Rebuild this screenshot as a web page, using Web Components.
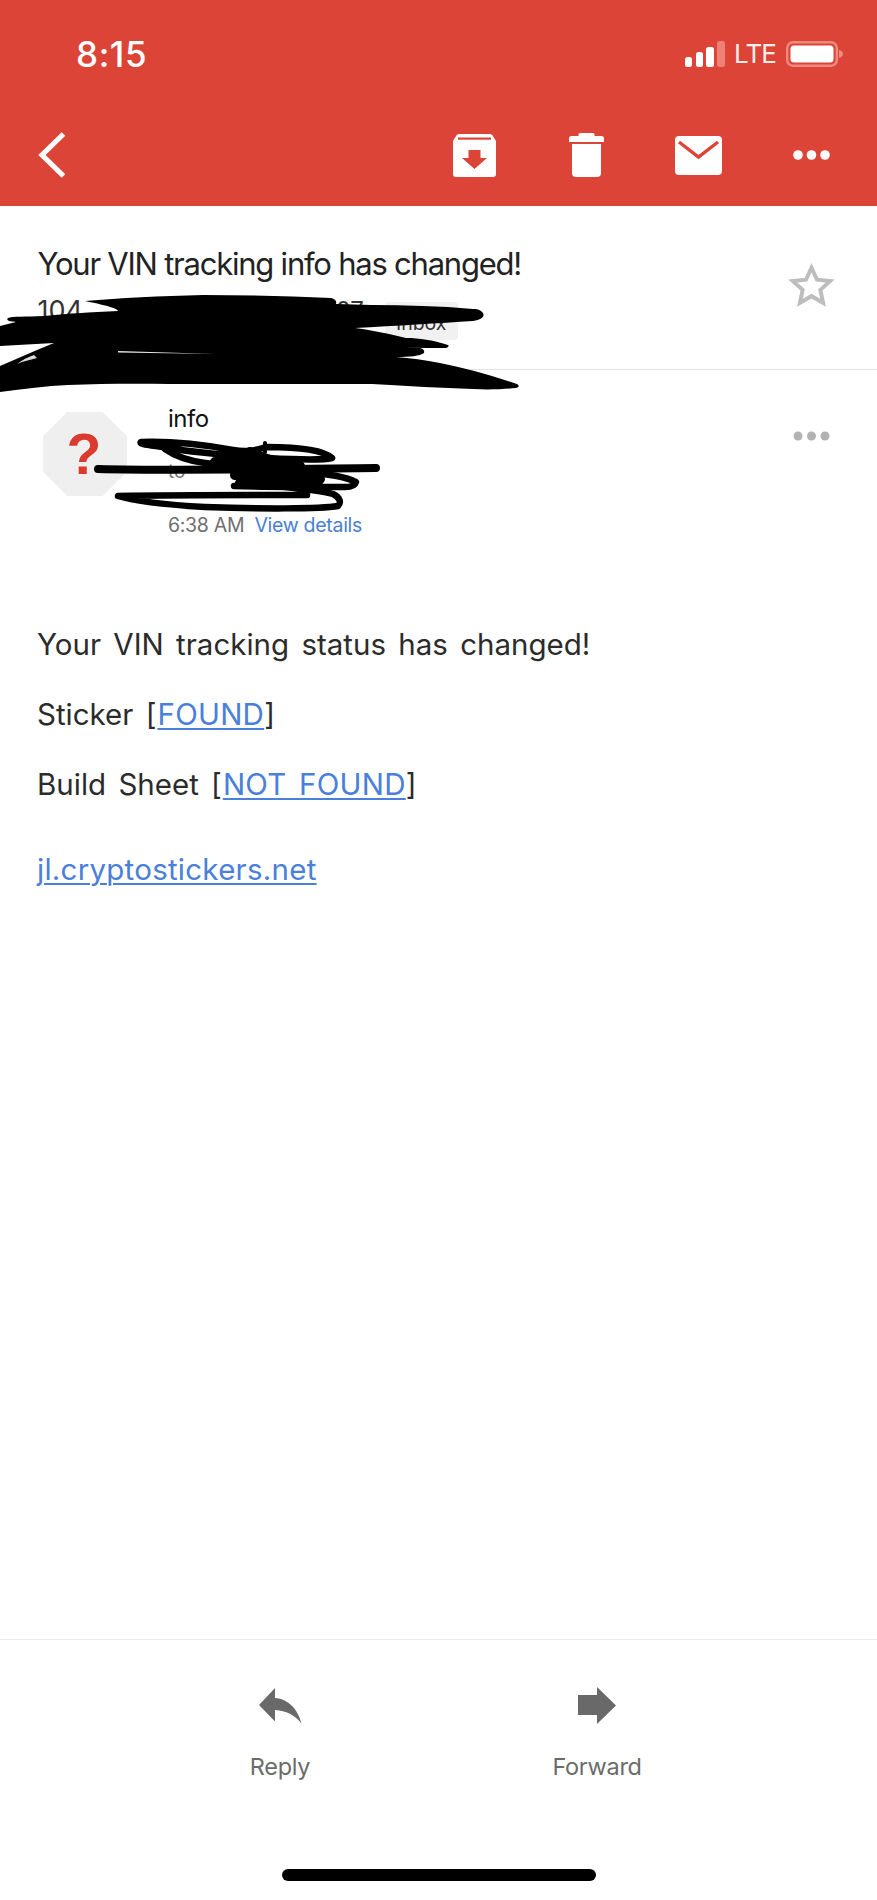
<!DOCTYPE html>
<html><head><meta charset="utf-8"><title>Mail</title>
<style>
html,body{margin:0;padding:0;background:#fff}
body{font-family:Inter,"Liberation Sans",sans-serif;width:877px;height:1900px;overflow:hidden}
</style></head>
<body>
<mail-app></mail-app>
<script>
function def(name, html){
  customElements.define(name, class extends HTMLElement{
    constructor(){super();this.attachShadow({mode:'open'}).innerHTML=html;}
  });
}
def('status-bar',`<style>
:host{display:flex;height:108px;align-items:center;justify-content:space-between;padding:0 34px 0 76px;color:#fff}
.time{font-size:35px;font-weight:500;letter-spacing:.6px;line-height:40px}
.right{display:flex;align-items:center}
.lte{font-size:26px;font-weight:400;letter-spacing:-.9px;margin:0 10px 0 9px;line-height:30px;color:#fdeeec}
svg{display:block}
</style>
<span class="time">8:15</span>
<div class="right">
<svg width="40" height="26" viewBox="0 0 40 26"><rect x="0" y="16" width="7" height="10" rx="2.5" fill="#fff"/><rect x="11" y="11" width="7" height="15" rx="2.5" fill="#fff"/><rect x="21" y="6" width="8" height="20" rx="2.5" fill="#fff"/><rect x="32" y="0" width="8" height="26" rx="2.5" fill="#ee8076"/></svg>
<span class="lte">LTE</span>
<svg width="57" height="26" viewBox="0 0 57 26"><rect x="1.2" y="1.2" width="49.6" height="23.6" rx="6" fill="none" stroke="#f0897f" stroke-width="2.4"/><rect x="4.5" y="4.5" width="43" height="17" rx="3.5" fill="#fff"/><path d="M53 9c2.500.6 4 2 4 4s-1.500 3.400-4 4z" fill="#f0897f"/></svg>
</div>`);
def('action-toolbar',`<style>
:host{display:flex;height:98px;box-sizing:border-box;align-items:center;padding:0 47px 4px 38px;position:relative}
svg{display:block;flex:none}
.back{margin-right:auto}
.gap{width:71px;flex:none}
</style>
<svg class="back" width="28" height="46" viewBox="0 0 28 46"><path d="M25.500 2 4 23l21.500 21" fill="none" stroke="#fff" stroke-width="5.200"/></svg>
<svg width="43" height="43" viewBox="0 0 43 43"><path d="M6 0h31a3 3 0 0 1 2.600 1.500L43 7v33a3 3 0 0 1-3 3H3a3 3 0 0 1-3-3V7l3.400-5.500A3 3 0 0 1 6 0z" fill="#fff"/><rect x="5" y="3.500" width="33" height="2.200" fill="#db4437"/><path d="M15.500 16h12v8h6.500L21.500 35 9 24h6.500z" fill="#db4437"/></svg>
<span class="gap" style="width:73px"></span>
<svg width="35" height="44" viewBox="0 0 35 44"><path d="M11 0h13a1.500 1.500 0 0 1 1.500 1.500V3h7A2.500 2.500 0 0 1 35 5.500V9H0V5.500A2.500 2.500 0 0 1 2.500 3h7V1.500A1.500 1.500 0 0 1 11 0z" fill="#fff"/><path d="M3 11h29v29a4 4 0 0 1-4 4H7a4 4 0 0 1-4-4z" fill="#fff"/></svg>
<span class="gap"></span>
<svg width="47" height="39" viewBox="0 0 47 39"><rect width="47" height="39" rx="4" fill="#fff"/><path d="M4 6l19.500 15L43 6" fill="none" stroke="#db4437" stroke-width="3.400"/></svg>
<span class="gap"></span>
<svg width="37" height="10" viewBox="0 0 37 10"><circle cx="5" cy="5" r="4.800" fill="#fff"/><circle cx="18.500" cy="5" r="4.800" fill="#fff"/><circle cx="32" cy="5" r="4.800" fill="#fff"/></svg>`);
def('app-header',`<style>:host{display:block;background:#db4437;height:206px}</style><status-bar></status-bar><action-toolbar></action-toolbar>`);
def('subject-block',`<style>
:host{display:flex;height:163px;border-bottom:1px solid #e3e3e3;padding:0 42px 0 37.500px;justify-content:space-between;position:relative;color:#222}
.col{padding-top:38px}
h1{margin:0;font-weight:400;font-size:31px;line-height:40px;letter-spacing:-1.230px;white-space:nowrap}
.meta{display:flex;align-items:flex-start;margin-top:12px;font-size:24px;line-height:30px;color:#333;width:420px;justify-content:space-between}
.day{font-size:27px}
.chip{background:#f1f1f1;border-radius:4px;padding:6px 11px 2px;font-size:19.500px;line-height:30px;margin-top:6px;color:#333}
svg{display:block;margin-top:57px;flex:none}
</style>
<div class="col"><h1>Your VIN tracking info has changed!</h1>
<div class="meta"><span class="day">104</span><span style="margin-left:auto;margin-right:21px">07</span><span class="chip">Inbox</span></div></div>
<svg width="47" height="45" viewBox="0 0 45 43"><path d="M22.500 4.500l5.300 11.500 12.500 1.300-9.300 8.400 2.600 12.300-11.100-6.300-11.100 6.300 2.600-12.300-9.300-8.400 12.500-1.300z" fill="none" stroke="#bdbdbd" stroke-width="3.800"/></svg>`);
def('sender-row',`<style>
:host{display:flex;padding:34px 47px 0 43px;color:#111;height:150px;box-sizing:border-box;position:relative}
.av{width:84px;height:84px;flex:none;background:#efefef;clip-path:polygon(29% 0,71% 0,100% 29%,100% 71%,71% 100%,29% 100%,0 71%,0 29%);display:flex;align-items:center;justify-content:center;margin-top:8px;color:#db3a2e;font:700 57px/84px "Liberation Sans",sans-serif;padding-right:2px;box-sizing:border-box}
.who{margin-left:41px;flex:1;display:flex;flex-direction:column}
.name{font-size:24px;line-height:30px;letter-spacing:-.5px}
.to{font-size:19px;line-height:24px;color:#777;margin-top:26px}
.when{font-size:19.500px;line-height:26px;color:#6f6f6f;margin-top:28px;letter-spacing:-.3px;white-space:nowrap}
.when a{color:#4a80d3;margin-left:5px;text-decoration:none}
svg{display:block;margin-top:27px;flex:none}
</style>
<div class="av">?</div>
<div class="who"><div class="name">info</div><div class="to">to</div><div class="when">6:38 AM <a>View details</a></div></div>
<svg width="37" height="10" viewBox="0 0 37 10"><circle cx="5" cy="5" r="4.500" fill="#b2b2b2"/><circle cx="18.500" cy="5" r="4.500" fill="#b2b2b2"/><circle cx="32" cy="5" r="4.500" fill="#b2b2b2"/></svg>`);
def('message-body',`<style>
:host{display:block;flex:1;padding:104px 37px 0;font-size:29.500px;color:#2b2b2b;word-spacing:4px}
p{margin:0 0 30px;line-height:40px;white-space:nowrap}
a{color:#4a80d9;text-decoration:underline;text-decoration-thickness:2px;text-underline-offset:3px;letter-spacing:.25px;margin-left:1px}
.url{margin-top:45px;word-spacing:0}
.url a{margin-left:0}
</style>
<p>Your VIN tracking status has changed!</p>
<p>Sticker [<a>FOUND</a>]</p>
<p>Build Sheet [<a>NOT FOUND</a>]</p>
<p class="url"><a>jl.cryptostickers.net</a></p>`);
def('footer-action',`<style>
:host{display:flex;flex-direction:column;align-items:center;width:200px;color:#6b6b6b;font-size:23.500px}
.i{height:37px;display:flex;align-items:center;justify-content:center}
span{margin-top:28px;line-height:30px;letter-spacing:-.3px}
</style><div class="i"><slot name="icon"></slot></div><span><slot></slot></span>`);
def('mail-footer',`<style>
:host{display:flex;flex-direction:column;align-items:center;height:261px;box-sizing:border-box;border-top:1px solid #ececec;padding:47px 0 19px}
.acts{display:flex;gap:117px}
.home{margin-top:auto;width:314px;height:12px;border-radius:6px;background:#000}
svg{display:block}
</style>
<div class="acts">
<footer-action><svg slot="icon" width="43" height="36" viewBox="0 0 43 36"><path d="M0 17 16 0v10c14 1 23 12 26.500 25.500C36 27 27 22.500 16 22v11.500z" fill="#696969"/></svg>Reply</footer-action>
<footer-action><svg slot="icon" width="38" height="37" viewBox="0 0 38 37"><path d="M0 8h19V0l19 18.500L19 37v-9H0z" fill="#696969"/></svg>Forward</footer-action>
</div>
<div class="home"></div>`);
def('redaction-scribble',`<style>
:host{position:absolute;left:0;top:0;width:877px;height:560px;pointer-events:none}
svg{display:block}
</style>
<svg width="877" height="560" viewBox="0 0 877 560">
<path d="M8 318C5 321 12 322 16 322L0 326V346L54 343 37 350 0 366V392C24 389 46 386 68 385 110 383 160 384 203 384 260 384 320 384 372 384 410 386 440 388 473 389 490 390 505 389 516 388 520 387 519 385 517 384 490 375 465 368 440 363 425 360 410 358 396 357 410 357 420 356 424 353 425 350 422 348 419 348L311 346C350 347 400 348 446 348 449 347 449 345 448 345 432 340 420 338 406 338 390 334 370 330 355 328 395 326 440 323 473 321 482 320 485 316 483 313 480 309 476 309 473 309 440 306 405 305 372 305L336 304C337 301 335 299 331 298 290 296 245 295 203 295 160 296 120 298 85 301 110 306 118 309 118 311 90 312 65 314 44 316 25 317 12 316 8 318Z" fill="#000"/>
<path d="M118 351 216 354 118 352.500Z" fill="#e6e6e6"/>
<path d="M17 364C22 360 28 357 34 355L37 358 22 362Z" fill="#d8d8d8"/>
<g fill="none" stroke="#000" stroke-linecap="round" stroke-linejoin="round">
<path d="M98 469C180 471 290 469 376 468" stroke-width="8"/>
<path d="M141 442C170 441 200 444 233 450 250 453 258 449 267 447 290 447 322 449 332 458 320 461 285 459 267 458 225 455 190 452 168 448 150 445 138 444 141 442Z" stroke-width="6.500"/>
<path d="M165 449C175 456 190 461 205 463 240 468 275 469 300 471 325 474 345 476 356 482 355 486 350 487 345 487 310 487 270 487 234 486" stroke-width="6.500"/>
<path d="M262 484C290 488 320 490 333 494 341 498 341 503 338 506 320 509 260 509 205 507 170 505 135 501 118 496 180 495 250 495 307 495" stroke-width="6.500"/>
<path d="M215 462C250 462 285 465 310 472M235 475C265 474 290 477 320 479M240 483C270 481 290 482 318 482M250 452C260 457 275 463 300 466" stroke-width="10"/>
<path d="M265 443 265 452" stroke-width="4"/>
</g></svg>`);
def('mail-app',`<style>
:host{display:flex;flex-direction:column;width:877px;height:1900px;position:relative;background:#fff}
</style>
<app-header></app-header><subject-block></subject-block><sender-row></sender-row><message-body></message-body><mail-footer></mail-footer><redaction-scribble></redaction-scribble>`);
</script>
</body></html>
